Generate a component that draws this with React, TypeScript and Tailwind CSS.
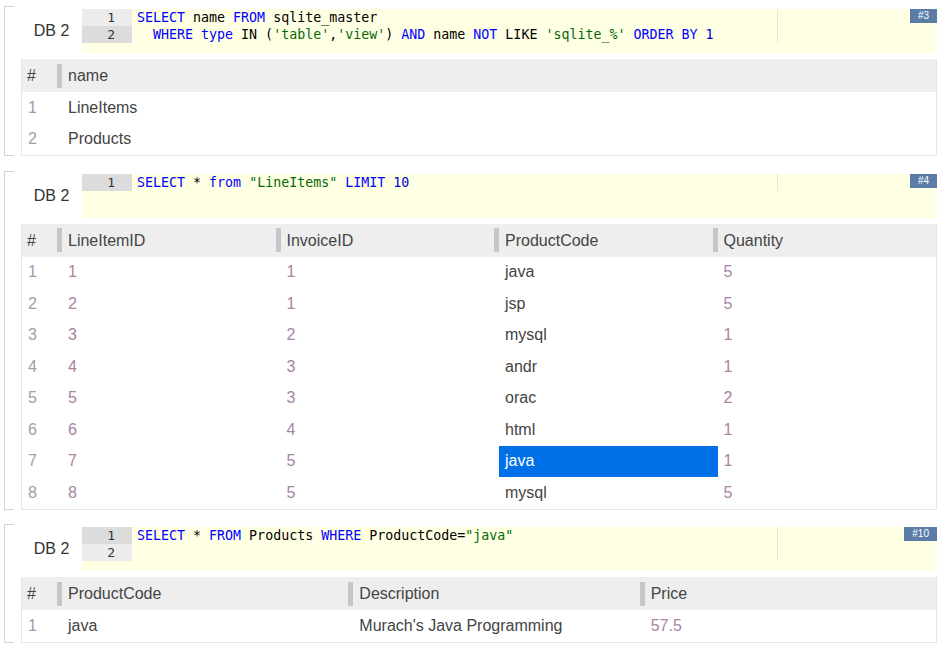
type Kind = "k" | "s" | "n" | "p";
type Tok = [string, Kind];

type Block = {
  id: string;
  lines: Tok[][];
  active: number;
  columns: string[];
  rows: (string | number)[][];
  selected?: [number, number];
};

const tokColor: Record<Kind, string> = {
  k: "text-[#0000ff]",
  s: "text-[#036a07]",
  n: "text-[#0000cd]",
  p: "text-black",
};

const blocks: Block[] = [
  {
    id: "#3",
    active: 1,
    lines: [
      [
        ["SELECT", "k"],
        [" name ", "p"],
        ["FROM", "k"],
        [" sqlite_master", "p"],
      ],
      [
        ["  ", "p"],
        ["WHERE", "k"],
        [" ", "p"],
        ["type", "k"],
        [" IN (", "p"],
        ["'table'", "s"],
        [",", "p"],
        ["'view'", "s"],
        [") ", "p"],
        ["AND", "k"],
        [" name ", "p"],
        ["NOT", "k"],
        [" LIKE ", "p"],
        ["'sqlite_%'", "s"],
        [" ", "p"],
        ["ORDER BY", "k"],
        [" ", "p"],
        ["1", "n"],
      ],
    ],
    columns: ["name"],
    rows: [["LineItems"], ["Products"]],
  },
  {
    id: "#4",
    active: 0,
    lines: [
      [
        ["SELECT", "k"],
        [" * ", "p"],
        ["from", "k"],
        [" ", "p"],
        ['"LineItems"', "s"],
        [" ", "p"],
        ["LIMIT", "k"],
        [" ", "p"],
        ["10", "n"],
      ],
    ],
    columns: ["LineItemID", "InvoiceID", "ProductCode", "Quantity"],
    rows: [
      [1, 1, "java", 5],
      [2, 1, "jsp", 5],
      [3, 2, "mysql", 1],
      [4, 3, "andr", 1],
      [5, 3, "orac", 2],
      [6, 4, "html", 1],
      [7, 5, "java", 1],
      [8, 5, "mysql", 5],
    ],
    selected: [6, 2],
  },
  {
    id: "#10",
    active: 0,
    lines: [
      [
        ["SELECT", "k"],
        [" * ", "p"],
        ["FROM", "k"],
        [" Products ", "p"],
        ["WHERE", "k"],
        [" ProductCode=", "p"],
        ['"java"', "s"],
      ],
      [],
    ],
    columns: ["ProductCode", "Description", "Price"],
    rows: [["java", "Murach's Java Programming", 57.5]],
  },
];

const gridCols: Record<number, string> = {
  1: "grid-cols-[40px_1fr]",
  3: "grid-cols-[40px_1fr_1fr_1fr]",
  4: "grid-cols-[40px_1fr_1fr_1fr_1fr]",
};

function Editor({ block }: { block: Block }) {
  return (
    <div className="relative flex-1 h-[44px] bg-[#ffffe4] flex">
      <div className="w-[50px] shrink-0">
        {block.lines.map((_, i) => (
          <div
            key={i}
            className={`h-[17px] leading-[17px] text-right pr-[17px] text-[13px] text-[#333] ${
              i === block.active ? "bg-[#dcdcdc]" : "bg-[#ececec]"
            }`}
          >
            {i + 1}
          </div>
        ))}
      </div>
      <div className="relative pl-[5px] flex-1 self-start">
        {block.lines.map((line, i) => (
          <div key={i} className="h-[17px] leading-[17px] whitespace-pre">
            {line.map(([text, kind], j) => (
              <span key={j} className={tokColor[kind]}>
                {text}
              </span>
            ))}
          </div>
        ))}
        <div className="absolute top-0 bottom-0 left-[645px] w-px bg-[#e6e6e6]" />
      </div>
      <div className="absolute top-0 right-0 h-[14px] leading-[14px] px-2 bg-[#5c7ca8] text-white text-[10px] font-['Liberation_Sans',Arial,sans-serif]">
        {block.id}
      </div>
    </div>
  );
}

function ResultTable({ block }: { block: Block }) {
  const cols = gridCols[block.columns.length];
  return (
    <div className="border-x border-b border-[#e6e6e6] text-[16px] text-[#444]">
      <div className={`grid ${cols} h-[33px] bg-[#eeeeee]`}>
        <div className="flex items-center pl-[5px] pt-px">#</div>
        {block.columns.map((c) => (
          <div key={c} className="flex items-center">
            <div className="-ml-[5px] w-[5px] h-[24px] bg-[#c6c6c6]" />
            <span className="ml-[6px] pt-px">{c}</span>
          </div>
        ))}
      </div>
      {block.rows.map((row, r) => (
        <div key={r} className={`grid ${cols} h-[31.5px] bg-white`}>
          <div className="flex items-center pl-[6px] text-[#a0a0a0]">{r + 1}</div>
          {row.map((v, c) => {
            const sel = block.selected && block.selected[0] === r && block.selected[1] === c;
            return (
              <div
                key={c}
                className={`flex items-center pl-[6px] ${
                  sel
                    ? "bg-[#0070e8] text-white"
                    : typeof v === "number"
                      ? "text-[#a784a2]"
                      : "text-[#444]"
                }`}
              >
                {v}
              </div>
            );
          })}
        </div>
      ))}
    </div>
  );
}

export default function App() {
  return (
    <div className="min-h-screen bg-white pl-[4px] pr-[14px] pt-[6px] flex flex-col gap-[14.5px] font-['Liberation_Sans',Arial,sans-serif]">
      {blocks.map((block) => (
        <div key={block.id} className="flex">
          {/* bracket */}
          <div className="w-[10px] shrink-0 border-y border-l border-[#d4d4d4]" />
          <div className="flex-1 ml-[7px] pt-[3px]">
            <div className="flex font-['DejaVu_Sans_Mono',monospace] text-[13.3px]">
              <div className="w-[61px] shrink-0 flex items-center justify-center text-[16px] text-[#333] font-['Liberation_Sans',Arial,sans-serif]">
                DB 2
              </div>
              <Editor block={block} />
            </div>
            <div className="mt-[6px]">
              <ResultTable block={block} />
            </div>
          </div>
        </div>
      ))}
    </div>
  );
}
